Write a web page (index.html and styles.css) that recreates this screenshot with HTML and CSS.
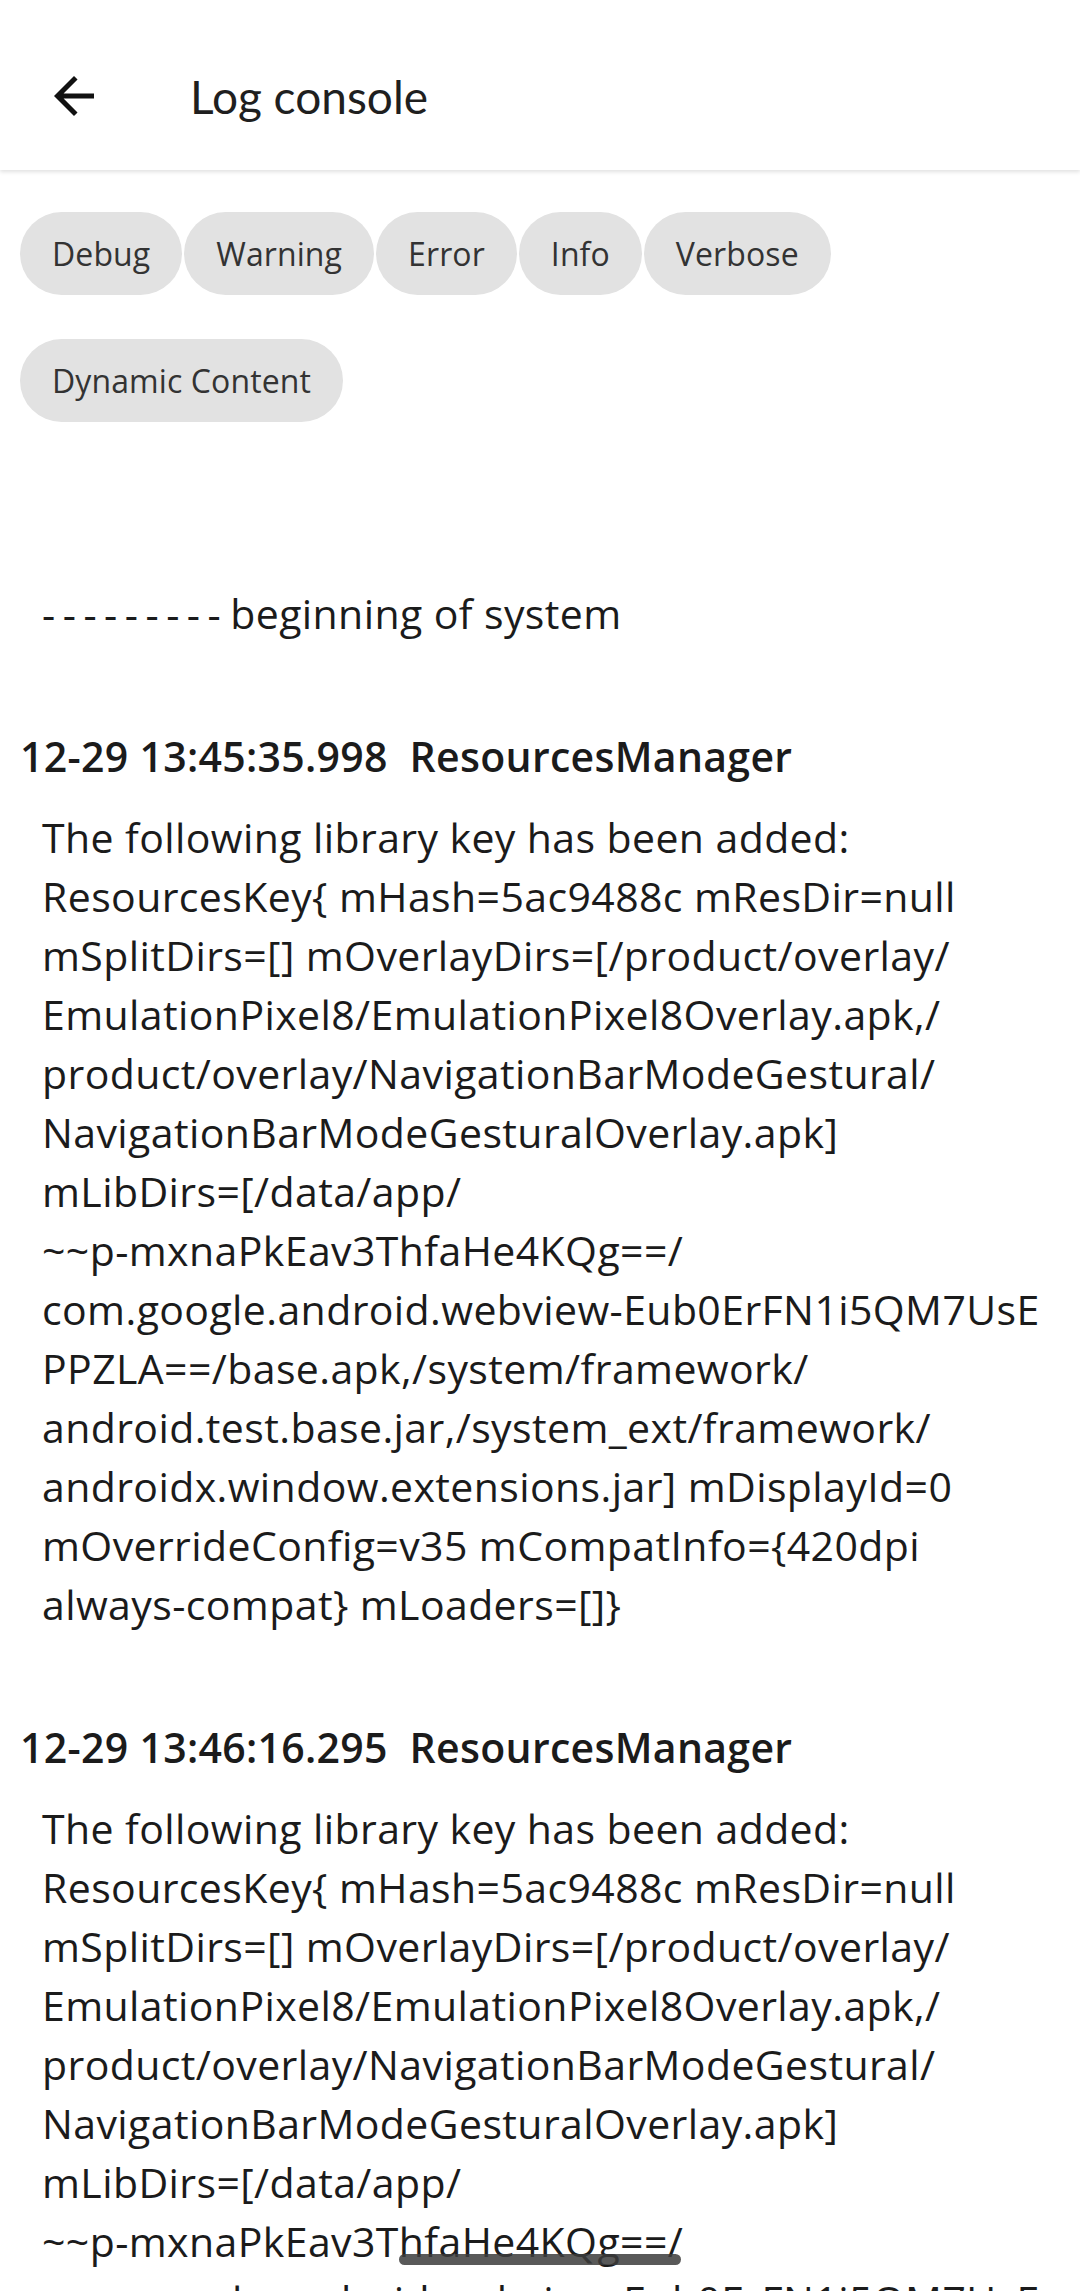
FILE: index.html
```html
<!DOCTYPE html>
<html lang="en">
<head>
  <meta charset="UTF-8">
  <meta name="viewport" content="width=device-width, initial-scale=1.0">
  <title>Log console</title>
  <link rel="stylesheet" href="styles.css">
</head>
<body>
  <header class="app-bar">
    <button class="back-btn" aria-label="Back">
      <svg viewBox="0 0 24 24" width="60" height="60"><path d="M20 11H7.83l5.59-5.59L12 4l-8 8 8 8 1.41-1.41L7.83 13H20v-2z"/></svg>
    </button>
    <h1>Log console</h1>
  </header>

  <div class="chips">
    <span class="chip">Debug</span>
    <span class="chip">Warning</span>
    <span class="chip">Error</span>
    <span class="chip">Info</span>
    <span class="chip">Verbose</span>
    <span class="chip">Dynamic Content</span>
  </div>

  <div class="log">
    <div class="system-line"><span class="dashes">---------</span>beginning of system</div>

    <div class="entry">
      <div class="entry-head">12-29 13:45:35.998&nbsp; ResourcesManager</div>
      <div class="entry-body">
        <div>The following library key has been added:</div>
        <div>ResourcesKey{ mHash=5ac9488c mResDir=null</div>
        <div>mSplitDirs=[] mOverlayDirs=[/product/overlay/</div>
        <div>EmulationPixel8/EmulationPixel8Overlay.apk,/</div>
        <div>product/overlay/NavigationBarModeGestural/</div>
        <div>NavigationBarModeGesturalOverlay.apk]</div>
        <div>mLibDirs=[/data/app/</div>
        <div>~~p-mxnaPkEav3ThfaHe4KQg==/</div>
        <div>com.google.android.webview-Eub0ErFN1i5QM7UsE</div>
        <div>PPZLA==/base.apk,/system/framework/</div>
        <div>android.test.base.jar,/system_ext/framework/</div>
        <div>androidx.window.extensions.jar] mDisplayId=0</div>
        <div>mOverrideConfig=v35 mCompatInfo={420dpi</div>
        <div>always-compat} mLoaders=[]}</div>
      </div>
    </div>

    <div class="entry">
      <div class="entry-head">12-29 13:46:16.295&nbsp; ResourcesManager</div>
      <div class="entry-body">
        <div>The following library key has been added:</div>
        <div>ResourcesKey{ mHash=5ac9488c mResDir=null</div>
        <div>mSplitDirs=[] mOverlayDirs=[/product/overlay/</div>
        <div>EmulationPixel8/EmulationPixel8Overlay.apk,/</div>
        <div>product/overlay/NavigationBarModeGestural/</div>
        <div>NavigationBarModeGesturalOverlay.apk]</div>
        <div>mLibDirs=[/data/app/</div>
        <div>~~p-mxnaPkEav3ThfaHe4KQg==/</div>
        <div>com.google.android.webview-Eub0ErFN1i5QM7UsE</div>
        <div>PPZLA==/base.apk,/system/framework/</div>
        <div>android.test.base.jar,/system_ext/framework/</div>
        <div>androidx.window.extensions.jar] mDisplayId=0</div>
        <div>mOverrideConfig=v35 mCompatInfo={420dpi</div>
        <div>always-compat} mLoaders=[]}</div>
      </div>
    </div>
  </div>

  <div class="gesture-bar"></div>
</body>
</html>
```

FILE: styles.css
```css
:root {
  --text: #1b1b1b;
  --chip-bg: #e2e2e2;
  --chip-text: #333;
}

* {
  box-sizing: border-box;
  margin: 0;
  padding: 0;
}

html, body {
  height: 100%;
  overflow: hidden;
}

body {
  background: #fff;
  color: var(--text);
  font-family: 'Open Sans', 'Liberation Sans', sans-serif;
}

.app-bar {
  height: 170px;
  display: flex;
  align-items: center;
  padding: 22px 0 0 44px;
  background: #fff;
  box-shadow: 0 2px 4px rgba(0,0,0,0.12);
  position: relative;
  z-index: 1;
}

.back-btn {
  border: none;
  background: none;
  width: 60px;
  height: 60px;
  display: flex;
}

.back-btn svg {
  fill: #111;
}

.app-bar h1 {
  font-family: 'Lato', 'Liberation Sans', sans-serif;
  font-size: 46px;
  font-weight: 400;
  margin-left: 86px;
  color: #1f1f1f;
}

.chips {
  display: flex;
  flex-wrap: wrap;
  column-gap: 2px;
  row-gap: 44px;
  padding: 42px 20px 0;
}

.chip {
  height: 83px;
  display: flex;
  align-items: center;
  padding: 0 32px;
  border-radius: 42px;
  background: var(--chip-bg);
  color: var(--chip-text);
  font-size: 32px;
  letter-spacing: 0.1px;
}

.log {
  display: flex;
  flex-direction: column;
  gap: 84px;
  padding-top: 162px;
  font-size: 41px;
  line-height: 59px;
  letter-spacing: 0.4px;
  white-space: nowrap;
}

.system-line {
  padding-left: 42px;
}

.dashes {
  letter-spacing: 7.5px;
  margin-right: 2px;
}

.entry-head {
  padding-left: 20px;
  font-weight: 600;
  letter-spacing: 0.3px;
}

.entry-body {
  padding-left: 42px;
  margin-top: 22px;
}

.gesture-bar {
  position: fixed;
  left: 399px;
  bottom: 26px;
  width: 282px;
  height: 11px;
  border-radius: 6px;
  background: rgba(60,60,60,0.85);
}
```
